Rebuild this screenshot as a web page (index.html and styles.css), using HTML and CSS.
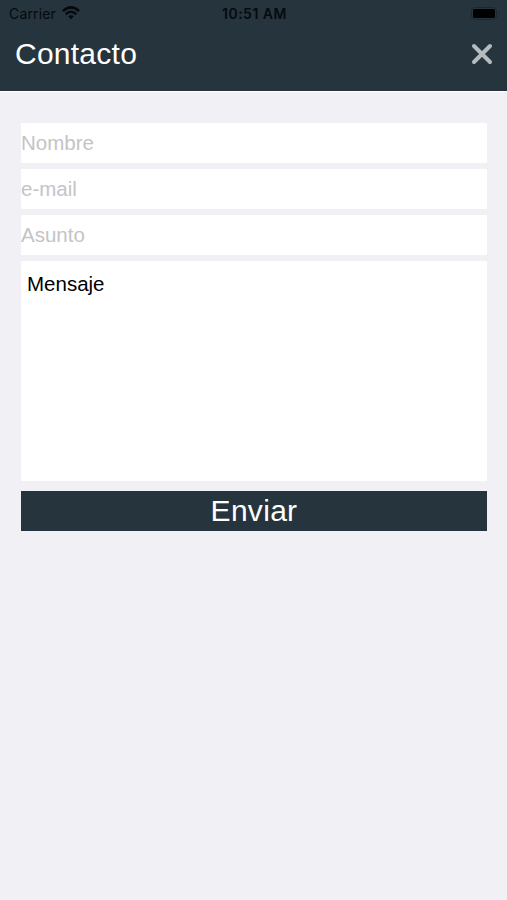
FILE: index.html
```html
<!DOCTYPE html>
<html lang="es">
<head>
<meta charset="utf-8">
<title>Contacto</title>
<link rel="stylesheet" href="styles.css">
</head>
<body>
<header class="header">
  <div class="status">
    <div class="carrier"><span class="carrier-name">Carrier</span>
      <svg class="wifi" viewBox="0 0 18 14" width="18" height="14"><g fill="none" stroke="#050a0e" stroke-width="2.500"><path d="M.9 5.200Q9-2.400 17.100 5.200"/><path d="M3.700 8.200Q9 3.400 14.300 8.200"/></g><path d="M6.200 10.300Q9 8 11.800 10.300L9 13.300z" fill="#050a0e"/></svg>
    </div>
    <span class="time">10:51 AM</span>
    <svg class="battery" viewBox="0 0 29 13" width="29" height="13"><rect x=".5" y=".5" width="25" height="12" rx="3.500" fill="none" stroke="#1b282f"/><rect x="2" y="2" width="22" height="9" rx="1.500"/><path d="M27 4.500q2 2 0 4z" fill="#1b282f"/></svg>
  </div>
  <div class="bar">
    <h1 class="title">Contacto</h1>
    <button class="close" type="button" aria-label="Cerrar"><svg viewBox="0 0 22 22" width="22" height="22"><path d="M3 3l16 16M19 3l-16 16" stroke="#b4bcbf" stroke-width="4" stroke-linecap="round"/></svg></button>
  </div>
</header>
<form class="form">
  <input class="field" type="text" placeholder="Nombre">
  <input class="field" type="email" placeholder="e-mail">
  <input class="field" type="text" placeholder="Asunto">
  <textarea class="message">Mensaje</textarea>
  <button class="send" type="button">Enviar</button>
</form>
</body>
</html>
```
FILE: styles.css
```css
* { box-sizing: border-box; }
body { margin: 0; min-height: 900px; background: #f0f0f5; font-family: "Liberation Sans", Arial, sans-serif; }
.header { height: 92px; background: #26343d; border-bottom: 1px solid #fff; }
.status { display: grid; grid-template-columns: 1fr auto 1fr; align-items: center; height: 27px; padding: 0 7px 0 9px; font-size: 14px; color: #050a0e; }
.carrier { display: flex; align-items: center; gap: 6px; font-family: Inter, sans-serif; letter-spacing: .15px; }
.wifi { margin-top: -1px; }
.time { font-family: Inter, sans-serif; font-weight: 600; letter-spacing: .5px; }
.battery { justify-self: end; }
.bar { display: flex; justify-content: space-between; align-items: center; height: 54px; padding: 0 14px 0 15px; }
.title { margin: 0; font-size: 30px; font-weight: 400; letter-spacing: .25px; color: #fff; }
.close { display: flex; padding: 0; border: 0; background: none; }
.form { display: flex; flex-direction: column; gap: 6px; padding: 31px 20px 0 21px; }
.field, .message { display: block; width: 100%; border: 0; border-radius: 1px; outline: 0; background: #fff; font: 20.5px "Liberation Sans", Arial, sans-serif; }
.field { height: 40px; padding: 0; }
.field::placeholder { color: #c4c4c6; opacity: 1; }
.message { height: 220px; padding: 11px 6px; resize: none; color: #000; overflow: hidden; }
.send { height: 40px; margin-top: 4px; padding: 0; border: 0; background: #26343d; color: #fff; font: 30px "Liberation Sans", Arial, sans-serif; letter-spacing: .3px; }
```
